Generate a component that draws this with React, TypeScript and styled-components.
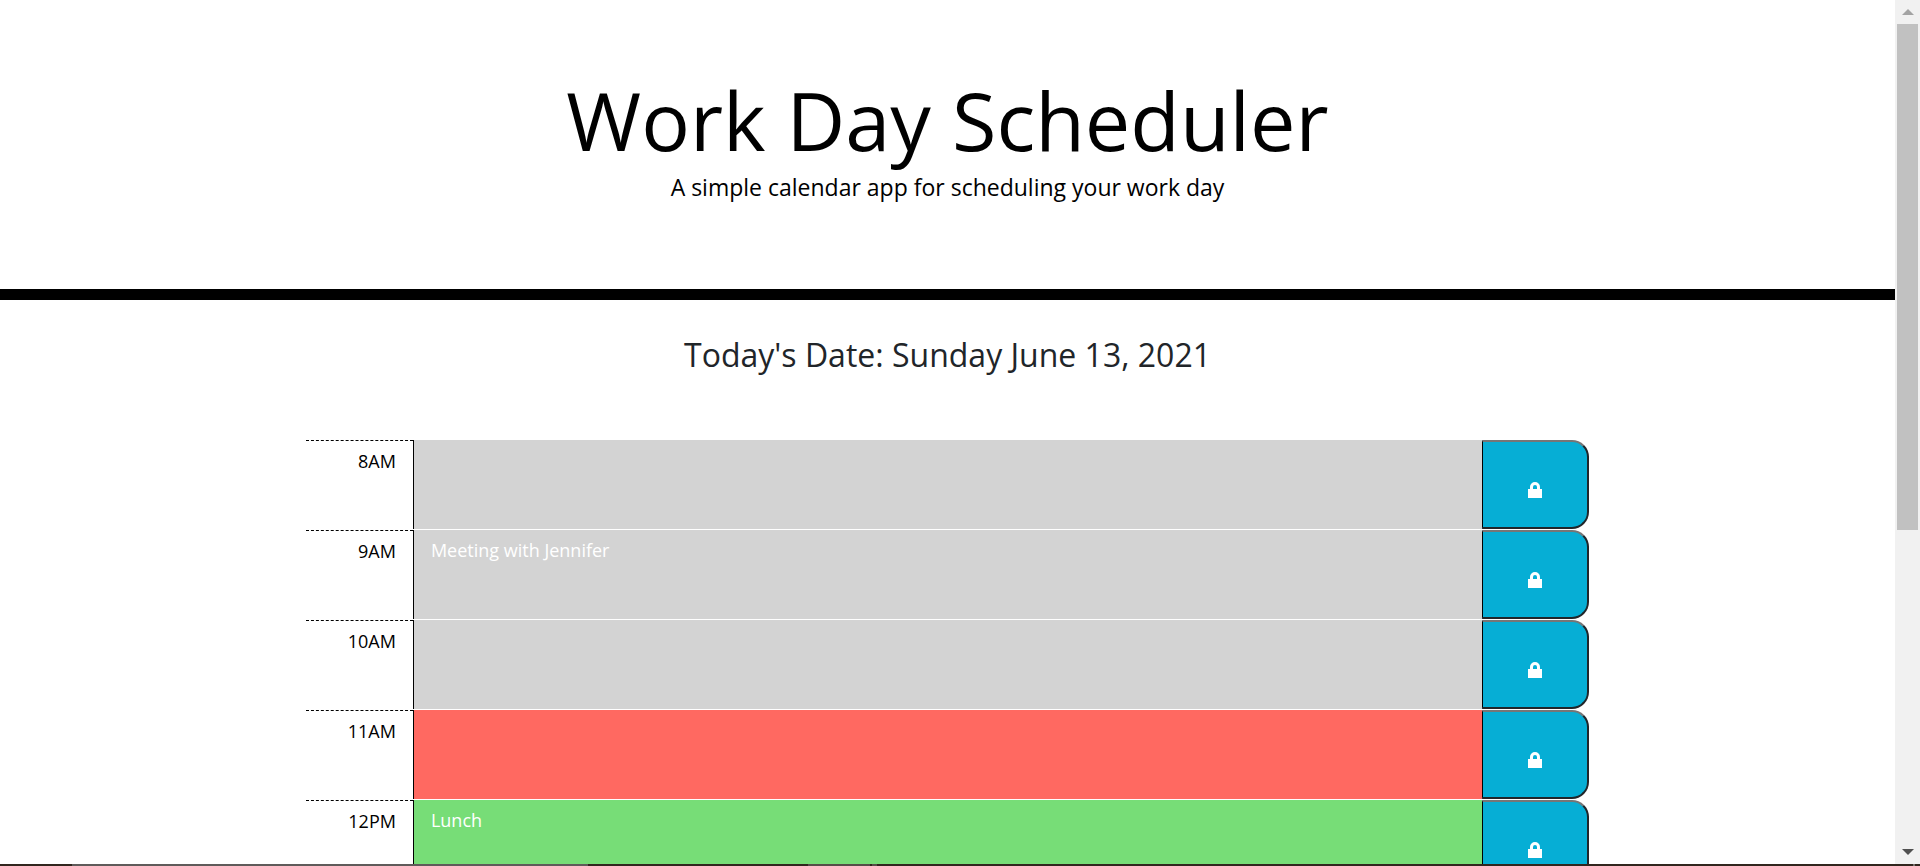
import React from "react";
import styled, { createGlobalStyle } from "styled-components";

const GlobalStyle = createGlobalStyle`
  *, *::before, *::after { box-sizing: border-box; }
  body {
    margin: 0;
    background: #fff;
    color: #212529;
    font-family: "Open Sans", sans-serif;
    font-size: 18px;
    line-height: 27px;
  }
`;

const Shell = styled.div`
  display: flex;
  flex-direction: column;
  height: 100vh;
`;

const Viewport = styled.div`
  display: flex;
  flex: 1;
  min-height: 0;
`;

const Page = styled.div`
  flex: 1;
  min-width: 0;
  overflow-y: auto;
  scrollbar-width: none;
`;

const Hero = styled.header`
  padding: 72px 18px;
  border-bottom: 11px solid #000;
  color: #000;
  text-align: center;
`;

const Title = styled.h1`
  margin: 0;
  font-size: 81px;
  font-weight: 400;
  line-height: 96px;
`;

const Lead = styled.p`
  margin: 0 0 11px;
  font-size: 23px;
  font-weight: 400;
  line-height: 38px;
`;

const Today = styled.h2`
  margin: 0;
  padding: 35px 0 65px;
  font-size: 32px;
  font-weight: 400;
  line-height: 40px;
  text-align: center;
`;

const Schedule = styled.main`
  max-width: 1283px;
  margin: 0 auto;
`;

const TimeBlock = styled.form`
  display: grid;
  grid-template-columns: 1fr 10fr 1fr;
  height: 90px;
`;

const Hour = styled.label`
  padding: 7px 17px 0 0;
  border-top: 1px dashed #000;
  color: #000;
  text-align: right;
`;

const slotColors = {
  past: "#d3d3d3",
  present: "#ff6961",
  future: "#77dd77",
};

type Slot = keyof typeof slotColors;

const Entry = styled.textarea<{ $slot: Slot }>`
  width: 100%;
  height: 89px;
  padding: 7px 17px;
  border: solid #000;
  border-width: 0 0 0 1px;
  border-radius: 0;
  outline: 0;
  resize: none;
  overflow: hidden;
  background: ${({ $slot }) => slotColors[$slot]};
  color: #fff;
  font: inherit;
`;

const SaveButton = styled.button`
  display: flex;
  align-items: center;
  justify-content: center;
  height: 89px;
  padding: 10px 0 0;
  border: 2px solid #212529;
  border-top-color: #767676;
  border-left: 1px solid #000;
  border-radius: 0 17px 17px 0;
  background: #06aed5;
  color: #fff;
  cursor: pointer;
`;

const Scrollbar = styled.div`
  display: flex;
  flex-direction: column;
  align-items: center;
  flex: none;
  width: 25px;
  background: #f1f1f1;
`;

const ArrowCell = styled.div`
  display: flex;
  align-items: center;
  justify-content: center;
  height: 24px;
  flex: none;
`;

const Track = styled.div`
  flex: 1;
  width: 21px;
`;

const Thumb = styled.div`
  height: 62%;
  background: #c1c1c1;
`;

const Taskbar = styled.div`
  display: flex;
  flex: none;
  height: 2px;
  background: #31261e;
`;

const TaskSegment = styled.div<{ $span: number; $color: string }>`
  flex: ${({ $span }) => $span} 0 0;
  background: ${({ $color }) => $color};
`;

const LockIcon = () => (
  <svg width="14" height="16" viewBox="0 0 14 16" aria-hidden="true">
    <path
      fill="currentColor"
      fillRule="evenodd"
      d="M0 7H2V5a5 5 0 0 1 10 0V7H14V16H0ZM5 7H9V5a2 2 0 0 0-4 0Z"
    />
  </svg>
);

const Arrow = ({ up, color }: { up?: boolean; color: string }) => (
  <svg width="12" height="6" viewBox="0 0 12 6" aria-hidden="true">
    <path fill={color} d={up ? "M6 0L12 6H0Z" : "M0 0H12L6 6Z"} />
  </svg>
);

const blocks: { hour: string; slot: Slot; text: string }[] = [
  { hour: "8AM", slot: "past", text: "" },
  { hour: "9AM", slot: "past", text: "Meeting with Jennifer" },
  { hour: "10AM", slot: "past", text: "" },
  { hour: "11AM", slot: "present", text: "" },
  { hour: "12PM", slot: "future", text: "Lunch" },
];

const segments = [
  { span: 72, color: "#31261e" },
  { span: 516, color: "#5f5b5a" },
  { span: 220, color: "#31261e" },
  { span: 62, color: "#564e48" },
  { span: 2, color: "#31261e" },
  { span: 5, color: "#564e48" },
  { span: 1036, color: "#31261e" },
  { span: 2, color: "#76706c" },
  { span: 5, color: "#31261e" },
];

export default function App() {
  return (
    <>
      <GlobalStyle />
      <Shell>
        <Viewport>
          <Page>
            <Hero>
              <Title>Work Day Scheduler</Title>
              <Lead>A simple calendar app for scheduling your work day</Lead>
            </Hero>
            <Today>Today's Date: Sunday June 13, 2021</Today>
            <Schedule>
              {blocks.map(({ hour, slot, text }) => (
                <TimeBlock key={hour} onSubmit={(e) => e.preventDefault()}>
                  <Hour htmlFor={hour}>{hour}</Hour>
                  <Entry id={hour} $slot={slot} defaultValue={text} spellCheck={false} />
                  <SaveButton type="submit">
                    <LockIcon />
                  </SaveButton>
                </TimeBlock>
              ))}
            </Schedule>
          </Page>
          <Scrollbar>
            <ArrowCell>
              <Arrow up color="#a3a3a3" />
            </ArrowCell>
            <Track>
              <Thumb />
            </Track>
            <ArrowCell>
              <Arrow color="#505050" />
            </ArrowCell>
          </Scrollbar>
        </Viewport>
        <Taskbar>
          {segments.map(({ span, color }, i) => (
            <TaskSegment key={i} $span={span} $color={color} />
          ))}
        </Taskbar>
      </Shell>
    </>
  );
}
